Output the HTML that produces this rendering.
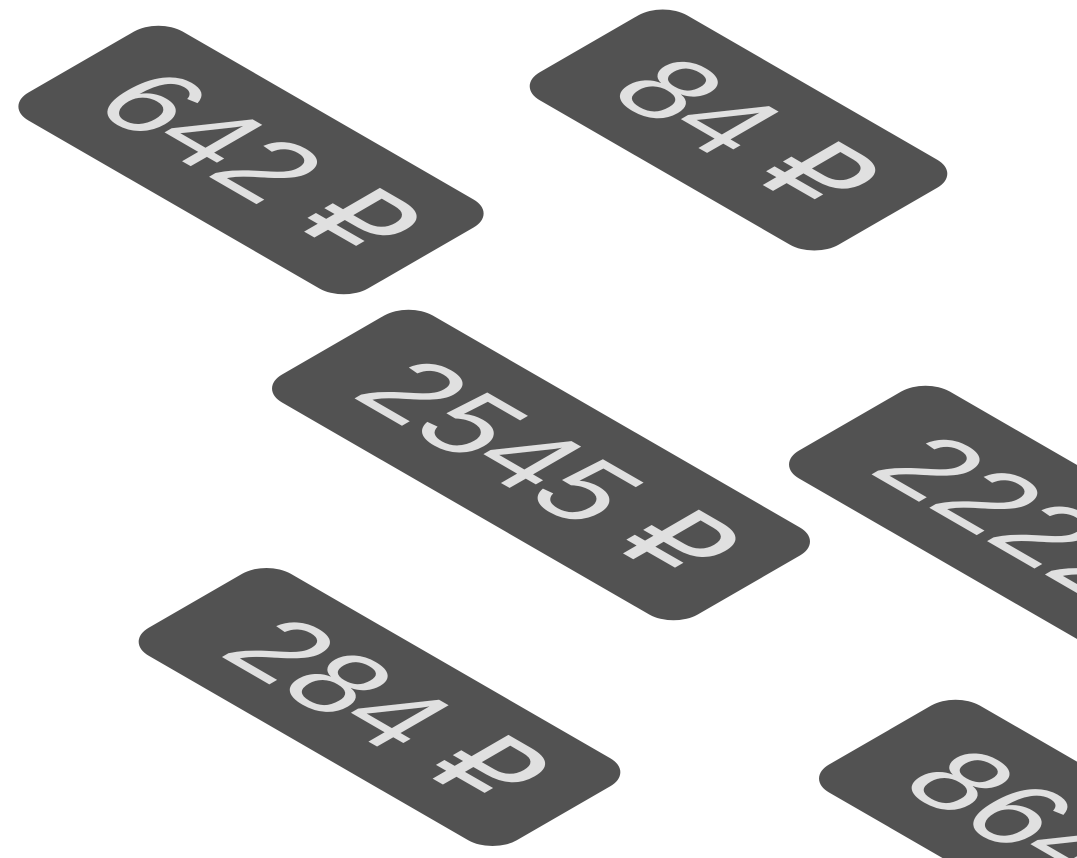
<!DOCTYPE html>
<html><head><meta charset="utf-8"><style>
html,body{margin:0;padding:0;background:#fff;width:1077px;height:858px;overflow:hidden;position:relative}
.t{position:absolute;box-sizing:border-box;padding-left:16px;background:#525252;color:#e0e0e0;border-radius:28px;display:flex;align-items:center;justify-content:center;
font-family:"Liberation Sans","DejaVu Sans",sans-serif;font-size:120px;line-height:1;white-space:nowrap;
transform:matrix(0.866,0.5,-0.866,0.5,0,0);transform-origin:50% 50%}
</style></head><body>
<div class="t" style="width:392px;height:178px;left:55px;top:71px">642 ₽</div>
<div class="t" style="width:345px;height:170px;left:566px;top:45px">84 ₽</div>
<div class="t" style="width:480px;height:174px;left:301px;top:378px">2545 ₽</div>
<div class="t" style="width:425px;height:164px;left:167px;top:625px">284 ₽</div>
<div class="t" style="width:480px;height:174px;left:818px;top:454px">2222 ₽</div>
<div class="t" style="width:480px;height:174px;left:848px;top:768px">8642 ₽</div>
</body></html>
